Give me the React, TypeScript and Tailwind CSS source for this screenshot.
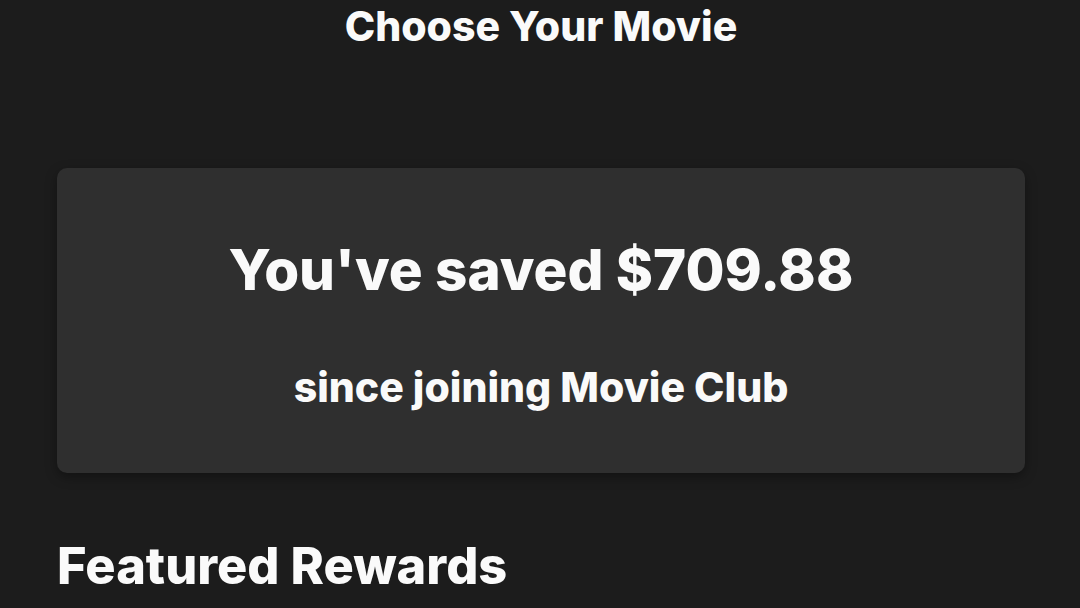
export default function App() {
  return (
    <div className="w-[1080px] h-[608px] overflow-hidden bg-[#1c1c1c] text-[#fafafa]" style={{ fontFamily: 'Inter, "Open Sans", sans-serif' }}>
      <div className="flex flex-col pl-[57px] pr-[55px]">
        <h1 className="text-center font-extrabold text-[41px] leading-[52px]">Choose Your Movie</h1>
        <div className="mt-[116px] h-[305px] rounded-[10px] bg-[#2f2f2f] shadow-[0_4px_12px_rgba(0,0,0,0.35)] flex flex-col items-center">
          <div className="mt-[70px] font-extrabold text-[56.5px] leading-[64px]">You've saved $709.88</div>
          <div className="mt-[62px] font-extrabold text-[41px] leading-[46px]">since joining Movie Club</div>
        </div>
        <h2 className="mt-[63px] font-extrabold text-[50.5px] leading-[60px]">Featured Rewards</h2>
      </div>
    </div>
  );
}
